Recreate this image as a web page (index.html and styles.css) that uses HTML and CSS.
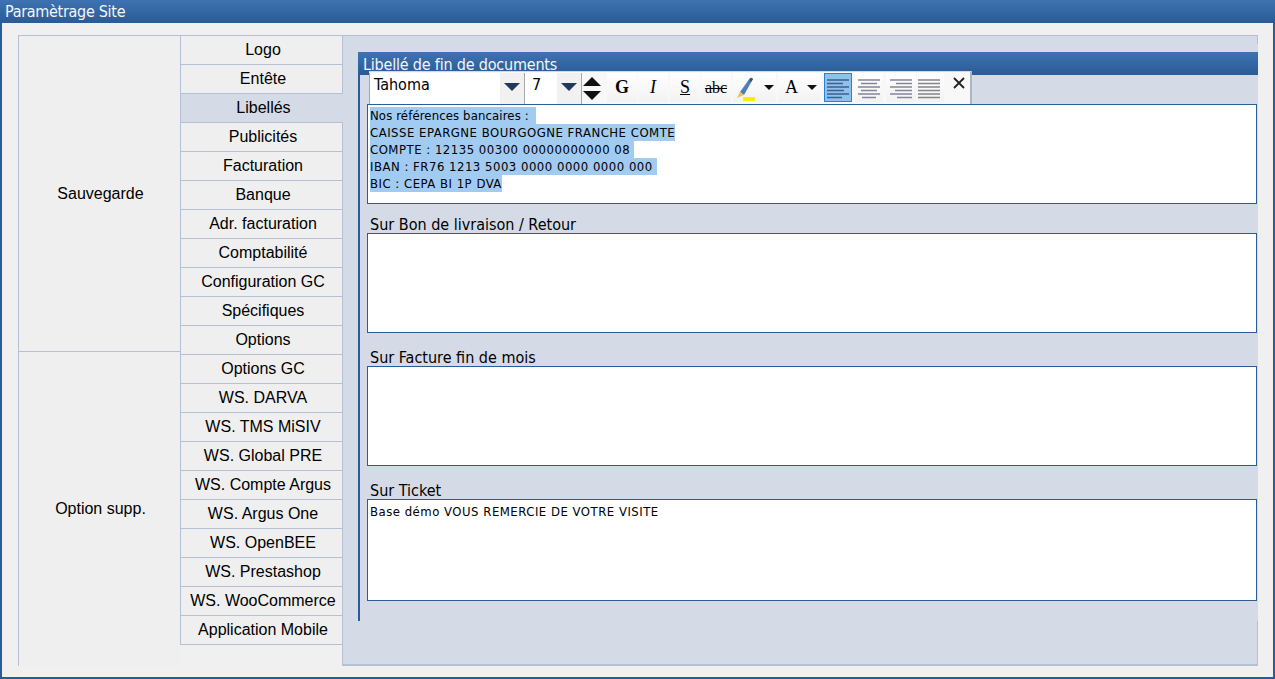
FILE: index.html
```html
<!DOCTYPE html>
<html lang="fr">
<head>
<meta charset="utf-8">
<title>Paramètrage Site</title>
<link rel="stylesheet" href="styles.css">
</head>
<body>
<div class="window">
  <header class="titlebar">Paramètrage Site</header>
  <main class="frame">
    <div class="panel">
      <div class="groups">
        <div class="group group-save">Sauvegarde</div>
        <div class="group group-opt">Option supp.</div>
      </div>
      <nav class="tabs">
        <div class="tab">Logo</div>
        <div class="tab">Entête</div>
        <div class="tab active">Libellés</div>
        <div class="tab">Publicités</div>
        <div class="tab">Facturation</div>
        <div class="tab">Banque</div>
        <div class="tab">Adr. facturation</div>
        <div class="tab">Comptabilité</div>
        <div class="tab">Configuration GC</div>
        <div class="tab">Spécifiques</div>
        <div class="tab">Options</div>
        <div class="tab">Options GC</div>
        <div class="tab">WS. DARVA</div>
        <div class="tab">WS. TMS MiSIV</div>
        <div class="tab">WS. Global PRE</div>
        <div class="tab">WS. Compte Argus</div>
        <div class="tab">WS. Argus One</div>
        <div class="tab">WS. OpenBEE</div>
        <div class="tab">WS. Prestashop</div>
        <div class="tab">WS. WooCommerce</div>
        <div class="tab">Application Mobile</div>
      </nav>
      <section class="content">
        <div class="section">
          <h2 class="section-head">Libellé de fin de documents</h2>
          <div class="toolbar">
            <div class="tb-select tb-font"><span class="tb-value">Tahoma</span><div class="tb-drop"><i class="caret"></i></div></div>
            <div class="tb-select tb-size"><span class="tb-value">7</span><div class="tb-drop"><i class="caret"></i></div></div>
            <div class="tb-step"><i class="up"></i><i class="down"></i></div>
            <div class="tb-btn tb-g">G</div>
            <div class="tb-btn tb-i">I</div>
            <div class="tb-btn tb-s">S</div>
            <div class="tb-btn tb-abe">abc</div>
            <div class="tb-btn tb-pen">
              <svg width="20" height="28" viewBox="0 0 20 28"><path d="M5 19 L15 5 Q17 4 18 6 L9 22 Z" fill="#4f7fb5"/><path d="M14 7 L16 5 L18 6 L16 9 Z" fill="#2f5587"/><path d="M5 19 L9 22 L2 25 Z" fill="#e8c060"/><rect x="8" y="24" width="12" height="4" fill="#ffee00"/></svg>
              <i class="caret small"></i>
            </div>
            <div class="tb-btn tb-a"><span>A</span><i class="caret small"></i></div>
            <div class="tb-btn tb-al active"><svg width="22" height="22" viewBox="0 0 22 22"><path d="M0 3h22M0 6.500h16M0 10h22M0 13.500h17M0 17h22M0 20.500h15" stroke="#3f5f8c" stroke-width="1.500"/></svg></div>
            <div class="tb-btn tb-ac"><svg width="22" height="22" viewBox="0 0 22 22"><path d="M0 3h22M3 6.500h16M0 10h22M3 13.500h16M0 17h22M4 20.500h14" stroke="#85859c" stroke-width="1.500"/></svg></div>
            <div class="tb-btn tb-ar"><svg width="22" height="22" viewBox="0 0 22 22"><path d="M0 3h22M6 6.500h16M0 10h22M5 13.500h17M0 17h22M7 20.500h15" stroke="#85859c" stroke-width="1.500"/></svg></div>
            <div class="tb-btn tb-aj"><svg width="22" height="22" viewBox="0 0 22 22"><path d="M0 3h22M0 6.500h22M0 10h22M0 13.500h22M0 17h22M0 20.500h22" stroke="#85858a" stroke-width="1.500"/></svg></div>
            <div class="tb-close"><svg width="12" height="12" viewBox="0 0 12 12"><path d="M1 1L11 11M11 1L1 11" stroke="#222" stroke-width="1.800"/></svg></div>
          </div>
          <div class="fields">
            <div class="editor selected">
              <span class="line lowercase">Nos références bancaires :&nbsp;&nbsp;</span>
              <span class="line">CAISSE EPARGNE BOURGOGNE FRANCHE COMTE</span>
              <span class="line">COMPTE : 12135 00300 00000000000 08&nbsp;</span>
              <span class="line">IBAN : FR76 1213 5003 0000 0000 0000 000&nbsp;</span>
              <span class="line">BIC : CEPA BI 1P DVA</span>
            </div>
            <label class="field-label first">Sur Bon de livraison / Retour</label>
            <div class="editor"></div>
            <label class="field-label">Sur Facture fin de mois</label>
            <div class="editor"></div>
            <label class="field-label">Sur Ticket</label>
            <div class="editor tall">Base démo VOUS REMERCIE DE VOTRE VISITE</div>
          </div>
        </div>
      </section>
    </div>
  </main>
</div>
</body>
</html>
```
FILE: styles.css
```css
* { box-sizing: border-box; }
html, body { margin: 0; height: 100%; overflow: hidden; }
body { font-family: "Liberation Sans", Arial, sans-serif; color: #000; }

.window { width: 1275px; height: 679px; display: flex; flex-direction: column; background: #f0f0f0; border: 2px solid #2b5c9a; border-top: 0; }
.titlebar { height: 23px; margin: 0 -2px; padding-left: 5px; background: linear-gradient(#3f72b2, #2a5b96); color: #f4f6fa; font: 16px/23px "DejaVu Sans Condensed", "DejaVu Sans", sans-serif; letter-spacing: -0.3px; flex: none; }
.frame { flex: 1; padding: 12px 15px 11px 16px; display: flex; min-height: 0; }
.panel { flex: 1; display: flex; min-width: 0; }

.groups { width: 162px; flex: none; display: flex; flex-direction: column; border-left: 1px solid #b4c0d4; border-top: 1px solid #b4c0d4; background: #efefef; font-size: 16px; }
.group { display: flex; align-items: center; justify-content: center; padding-left: 2px; }
.group-save { height: 316px; border-bottom: 1px solid #b4c0d4; }
.group-opt { flex: 1; }

.tabs { width: 163px; flex: none; border-top: 1px solid #b4c0d4; border-right: 1px solid #b4c0d4; }
.tab { height: 29px; padding-left: 3px; border-left: 1px solid #b4c0d4; border-bottom: 1px solid #b4c0d4; display: flex; align-items: center; justify-content: center; font-size: 16px; background: #efefef; }
.tab.active { background: #d4dbe6; margin-right: -1px; }

.content { flex: 1; min-width: 0; background: #d4dbe6; border-top: 1px solid #b4c0d4; border-bottom: 2px solid #b4c0d4; border-right: 1px solid #b4c0d4; padding: 16px 0 43px 15px; }
.section { position: relative; height: 100%; margin-right: -1px; background: #d4dbe6; border-left: 2px solid #2b5c9a; }
.section::before { content: ""; position: absolute; top: -8px; right: 0; width: 1px; height: 8px; background: #d4dbe6; }
.section-head { margin: 0 0 0 -2px; height: 23px; padding-left: 5px; background: linear-gradient(#3f72b2, #2a5b96); color: #f4f6fa; font: 400 16px/25px "DejaVu Sans Condensed", "DejaVu Sans", sans-serif; letter-spacing: -0.2px; overflow: hidden; }

.toolbar { position: absolute; left: 9px; top: 19px; width: 603px; height: 33px; display: flex; background: #f8f8f8; border-top: 1px solid #d8d8d8; border-right: 2px solid #b0b4bc; z-index: 2; padding-top: 1px; }
.tb-select { display: flex; border-left: 1px solid #a8a8a8; height: 31px; flex: none; }
.tb-value { flex: 1; background: #fff; font: 16px/24px "DejaVu Sans Condensed", "DejaVu Sans", sans-serif; padding-left: 4px; }
.tb-size .tb-value { padding-left: 7px; }
.tb-font { width: 155px; }
.tb-size { width: 57px; }
.tb-drop { width: 24px; flex: none; background: #f1f1f1; display: flex; justify-content: center; padding-top: 10px; }
.caret { width: 0; height: 0; border-left: 8px solid transparent; border-right: 8px solid transparent; border-top: 8px solid #1f3a5c; display: block; }
.caret.small { border-left-width: 5px; border-right-width: 5px; border-top: 5px solid #111; }
.tb-step { width: 24px; height: 31px; flex: none; display: flex; flex-direction: column; align-items: center; gap: 5px; padding-top: 4px; padding-right: 4px; border-left: 1px solid #a8a8a8; }
.up { width: 0; height: 0; border-left: 9px solid transparent; border-right: 9px solid transparent; border-bottom: 9px solid #111; display: block; }
.down { width: 0; height: 0; border-left: 9px solid transparent; border-right: 9px solid transparent; border-top: 9px solid #111; display: block; }

.tb-btn { flex: none; height: 29px; display: flex; align-items: center; justify-content: center; background: linear-gradient(#fff, #f2f2f2); font-family: "Liberation Serif", serif; font-size: 18px; }
.tb-g { width: 30px; margin: 0 1px 0 2px; font-weight: 700; }
.tb-i { width: 30px; margin-right: 2px; font-style: italic; }
.tb-s { width: 30px; margin-right: 1px; text-decoration: underline; }
.tb-abe { width: 30px; margin-right: 2px; font-size: 16px; text-decoration: line-through; }
.tb-pen { width: 43px; margin-right: 2px; justify-content: flex-start; padding-left: 2px; gap: 9px; align-items: flex-start; }
.tb-pen .caret { margin-top: 12px; }
.tb-a { width: 42px; margin-right: 4px; justify-content: flex-start; padding-left: 7px; gap: 9px; }
.tb-al { width: 28px; margin-right: 3px; }
.tb-al.active { background: #8fc0ee; border: 1px solid #2f7fd0; }
.tb-ac { width: 28px; margin-right: 3px; }
.tb-ar { width: 30px; margin-right: 1px; }
.tb-aj { width: 27px; margin-right: 3px; padding-right: 3px; }
.tb-close { width: 23px; display: flex; justify-content: center; padding-top: 4px; }

.fields { padding: 29px 1px 0 7px; display: flex; flex-direction: column; }
.editor { height: 100px; background: #fff; border: 1px solid #2b5c9a; padding: 2px; font: 13px/17px "DejaVu Sans Condensed", "DejaVu Sans", sans-serif; letter-spacing: 0.5px; flex: none; }
.editor.tall { height: 102px; padding-top: 3px; }
.line { display: block; width: fit-content; background: #a1cbf0; white-space: nowrap; }
.line.lowercase { letter-spacing: 0.12px; }
.field-label { display: flex; align-items: flex-end; height: 33px; padding-left: 3px; font: 16px/17px "DejaVu Sans Condensed", "DejaVu Sans", sans-serif; }
.field-label.first { height: 29px; }
```
